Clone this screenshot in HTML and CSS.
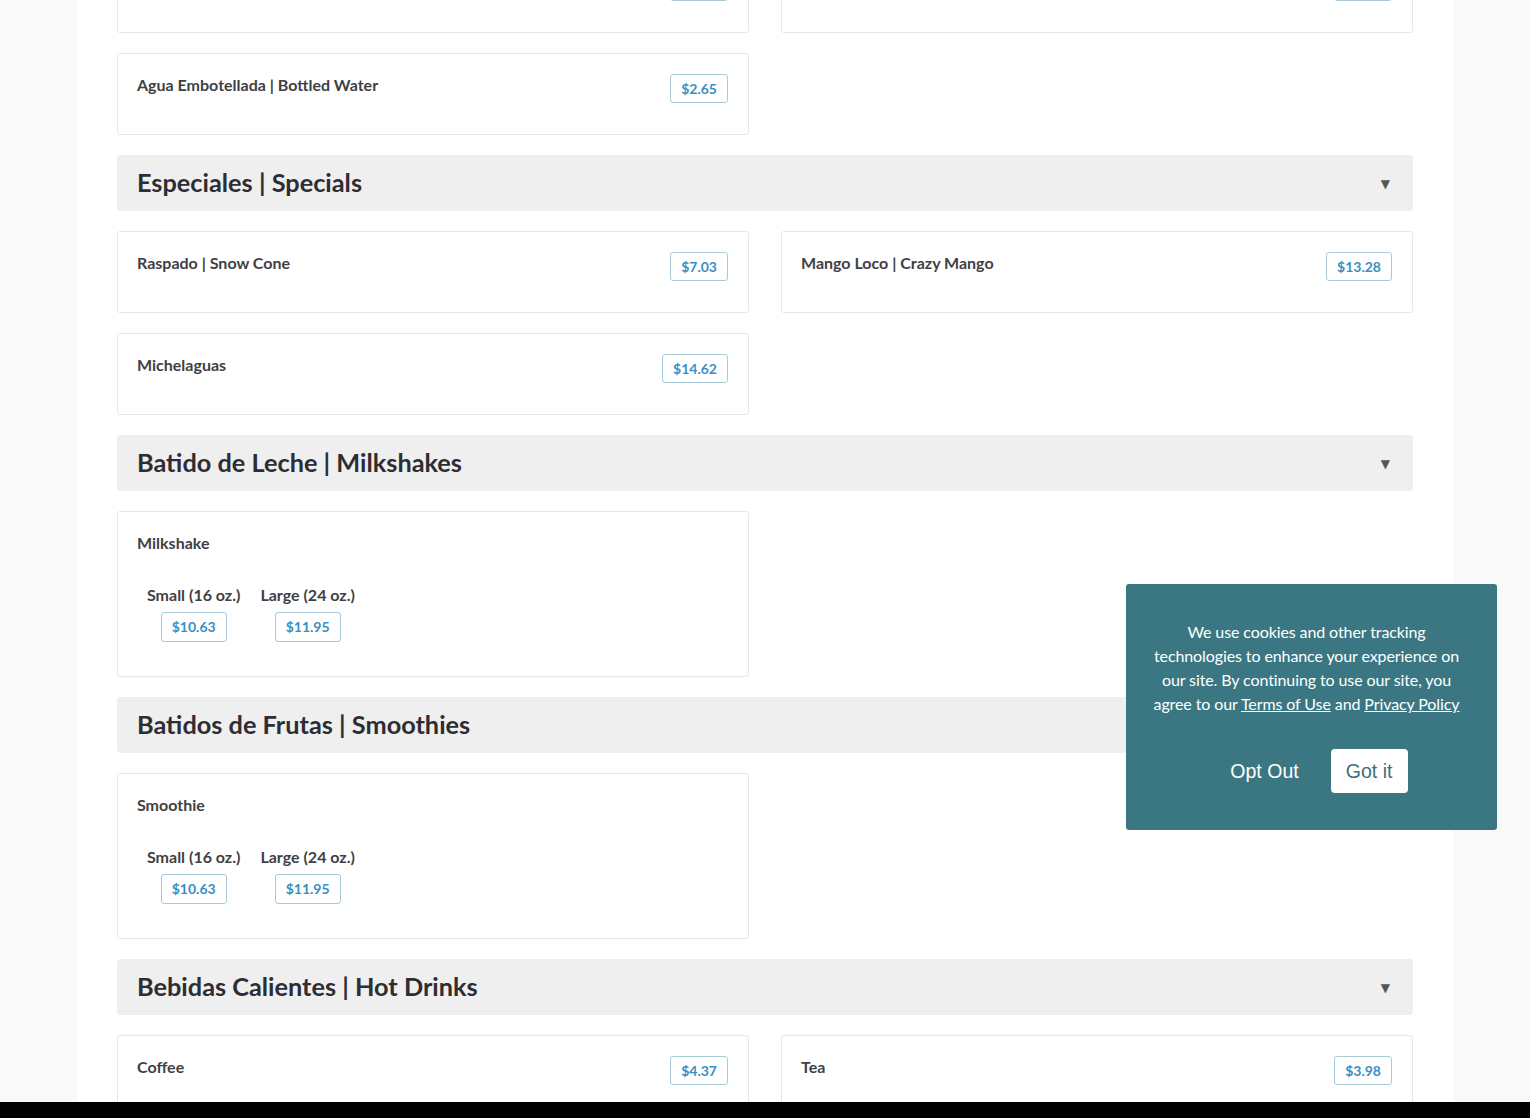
FILE: index.html
```html
<!DOCTYPE html>
<html lang="en">
<head>
<meta charset="utf-8">
<title>Menu</title>
<link rel="stylesheet" href="styles.css">
</head>
<body>
<div class="page">
  <div class="menu">
    <div class="grid">
      <div class="card"><div class="row"><span class="name">Jugo de Naranja | Orange Juice</span><span class="price">$4.25</span></div></div>
      <div class="card"><div class="row"><span class="name">Refresco | Soda</span><span class="price price-r">$2.95</span></div></div>
      <div class="card"><div class="row"><span class="name">Agua Embotellada | Bottled Water</span><span class="price">$2.65</span></div></div>
    </div>

    <div class="section"><h2>Especiales | Specials</h2><span class="arrow">&#9660;</span></div>
    <div class="grid">
      <div class="card"><div class="row"><span class="name">Raspado | Snow Cone</span><span class="price">$7.03</span></div></div>
      <div class="card"><div class="row"><span class="name">Mango Loco | Crazy Mango</span><span class="price">$13.28</span></div></div>
      <div class="card"><div class="row"><span class="name">Michelaguas</span><span class="price">$14.62</span></div></div>
    </div>

    <div class="section"><h2>Batido de Leche | Milkshakes</h2><span class="arrow">&#9660;</span></div>
    <div class="grid">
      <div class="card card-sizes">
        <div class="name">Milkshake</div>
        <div class="sizes">
          <div class="size"><span class="size-label">Small (16 oz.)</span><span class="price">$10.63</span></div>
          <div class="size"><span class="size-label">Large (24 oz.)</span><span class="price">$11.95</span></div>
        </div>
      </div>
    </div>

    <div class="section"><h2>Batidos de Frutas | Smoothies</h2><span class="arrow">&#9660;</span></div>
    <div class="grid">
      <div class="card card-sizes">
        <div class="name">Smoothie</div>
        <div class="sizes">
          <div class="size"><span class="size-label">Small (16 oz.)</span><span class="price">$10.63</span></div>
          <div class="size"><span class="size-label">Large (24 oz.)</span><span class="price">$11.95</span></div>
        </div>
      </div>
    </div>

    <div class="section"><h2>Bebidas Calientes | Hot Drinks</h2><span class="arrow">&#9660;</span></div>
    <div class="grid">
      <div class="card"><div class="row"><span class="name">Coffee</span><span class="price">$4.37</span></div></div>
      <div class="card"><div class="row"><span class="name">Tea</span><span class="price">$3.98</span></div></div>
      <div class="card"><div class="row"><span class="name">Hot Chocolate</span><span class="price">$4.65</span></div></div>
    </div>
  </div>
</div>

<div class="cookie">
  <p class="cookie-text">We use cookies and other tracking technologies to enhance your experience on our site. By continuing to use our site, you agree to our <a href="#">Terms of Use</a> and <a href="#">Privacy Policy</a></p>
  <div class="cookie-actions">
    <button class="opt-out" type="button">Opt Out</button>
    <button class="got-it" type="button">Got it</button>
  </div>
</div>

<div class="bottom-bar"></div>
</body>
</html>
```

FILE: styles.css
```css
* { box-sizing: border-box; }

html, body {
  margin: 0;
  padding: 0;
}

body {
  background: #f9f9f9;
  font-family: Lato, "Open Sans", Arial, sans-serif;
  color: #3a3a3a;
  overflow: hidden;
  height: 1118px;
}

.page {
  width: 1376px;
  margin: 0 auto;
  background: #ffffff;
  min-height: 1200px;
}

.menu {
  padding: 0 40px;
  margin-top: -49px;
}

.grid {
  display: grid;
  grid-template-columns: 1fr 1fr;
  column-gap: 32px;
  row-gap: 20px;
  margin-bottom: 20px;
}

.card {
  border: 1px solid #e6e6e6;
  border-radius: 3px;
  background: #fff;
  padding: 19px 20px 0 19px;
  height: 82px;
}

.row {
  display: flex;
  justify-content: space-between;
  align-items: flex-start;
}

.name {
  font-size: 16px;
  line-height: 24px;
  font-weight: 700;
  color: #3f3f44;
}

.price {
  display: inline-block;
  border: 1px solid #a9cbd9;
  border-radius: 3px;
  color: #3a8fc2;
  font-size: 14px;
  font-weight: 700;
  line-height: 27px;
  height: 29px;
  padding: 0 10px;
  margin-top: 1px;
  background: #fff;
}

.section {
  display: flex;
  align-items: center;
  justify-content: space-between;
  height: 56px;
  background: #efefef;
  border-radius: 3px;
  padding: 0 23px 2px 20px;
  margin-bottom: 20px;
}

.section h2 {
  margin: 0;
  font-size: 25.3px;
  font-weight: 700;
  color: #2d2d33;
}

.arrow {
  font-size: 12px;
  color: #555;
  font-family: "DejaVu Sans", sans-serif;
  margin-top: 3px;
}

.card-sizes {
  height: 166px;
  padding: 19px 20px 0 19px;
}

.sizes {
  display: flex;
  gap: 20px;
  margin-top: 28px;
  padding-left: 10px;
}

.size {
  display: flex;
  flex-direction: column;
  align-items: center;
}

.size-label {
  font-size: 16px;
  font-weight: 700;
  line-height: 24px;
  color: #3f3f44;
}

.size .price {
  margin-top: 5px;
  height: 30px;
  line-height: 28px;
}

.cookie {
  position: fixed;
  left: 1126px;
  top: 584px;
  width: 371px;
  height: 246px;
  background: #3b7783;
  border-radius: 3px;
  padding: 36px 34px 0 24px;
  text-align: center;
  color: #fff;
}

.cookie-text {
  margin: 0;
  font-size: 16px;
  line-height: 24px;
  letter-spacing: -0.1px;
}

.cookie-text a {
  color: #fff;
  text-decoration: underline;
}

.cookie-actions {
  display: flex;
  justify-content: center;
  align-items: center;
  gap: 32px;
  margin-top: 33px;
  padding-left: 25px;
}

.cookie-actions button {
  font-family: "Liberation Sans", Arial, sans-serif;
  font-size: 19.5px;
  border: none;
  cursor: pointer;
}

.opt-out {
  background: transparent;
  color: #fff;
  padding: 0;
}

.got-it {
  background: #fff;
  color: #3b6f79;
  border-radius: 4px;
  height: 44px;
  width: 77px;
  padding: 0;
}

.bottom-bar {
  position: fixed;
  left: 0;
  right: 0;
  bottom: 0;
  height: 16px;
  background: #000;
}
```
